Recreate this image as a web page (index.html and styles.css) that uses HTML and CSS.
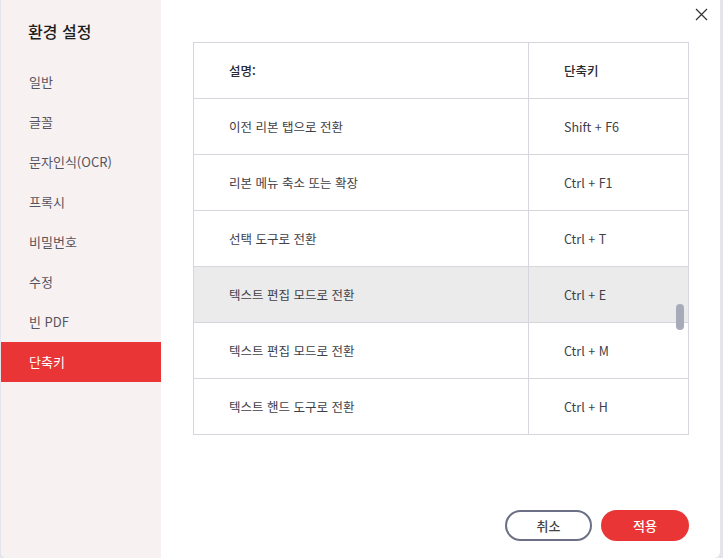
FILE: index.html
```html
<!DOCTYPE html>
<html lang="ko">
<head>
<meta charset="utf-8">
<link rel="stylesheet" href="styles.css">
</head>
<body>
<div class="dialog">
  <aside class="sidebar">
    <h1 class="title">환경 설정</h1>
    <nav class="menu">
      <div class="item">일반</div>
      <div class="item">글꼴</div>
      <div class="item">문자인식(OCR)</div>
      <div class="item">프록시</div>
      <div class="item">비밀번호</div>
      <div class="item">수정</div>
      <div class="item">빈 PDF</div>
      <div class="item active">단축키</div>
    </nav>
  </aside>
  <main class="content">
    <button class="close" aria-label="닫기">
      <svg width="13" height="13" viewBox="0 0 13 13"><path d="M1 1L12 12M12 1L1 12" stroke="#333" stroke-width="1.2" fill="none"/></svg>
    </button>
    <div class="table-wrap">
      <div class="row head"><div class="c1">설명:</div><div class="c2">단축키</div></div>
      <div class="row"><div class="c1">이전 리본 탭으로 전환</div><div class="c2">Shift + F6</div></div>
      <div class="row"><div class="c1">리본 메뉴 축소 또는 확장</div><div class="c2">Ctrl + F1</div></div>
      <div class="row"><div class="c1">선택 도구로 전환</div><div class="c2">Ctrl + T</div></div>
      <div class="row hover"><div class="c1">텍스트 편집 모드로 전환</div><div class="c2">Ctrl + E</div></div>
      <div class="row"><div class="c1">텍스트 편집 모드로 전환</div><div class="c2">Ctrl + M</div></div>
      <div class="row last"><div class="c1">텍스트 핸드 도구로 전환</div><div class="c2">Ctrl + H</div></div>
      <div class="thumb"></div>
    </div>
    <div class="actions">
      <button class="btn cancel">취소</button>
      <button class="btn apply">적용</button>
    </div>
  </main>
</div>
</body>
</html>
```
FILE: styles.css
```css
* { box-sizing: border-box; }
html, body { margin: 0; padding: 0; }
body {
  width: 723px;
  height: 558px;
  background: #e4e4ea;
  font-family: "Noto Sans CJK KR", "Noto Sans", sans-serif;
  overflow: hidden;
}
.dialog {
  display: flex;
  width: 719px;
  height: 558px;
  margin-left: 1px;
  background: #fff;
  border-radius: 0 0 6px 6px;
  overflow: hidden;
}
.sidebar {
  width: 160px;
  flex: none;
  background: #f8f1f1;
  padding-top: 20px;
}
.title {
  margin: 0 0 20px 27px;
  font-size: 16px;
  font-weight: 500;
  color: #1e1e1e;
  line-height: 22px;
}
.menu { display: flex; flex-direction: column; }
.item {
  height: 40px;
  line-height: 40px;
  padding-left: 28px;
  font-size: 13px;
  color: #555560;
}
.item.active {
  background: #e93535;
  color: #fff;
}
.content {
  position: relative;
  flex: 1;
  display: flex;
  flex-direction: column;
  padding: 42px 30px 17px 32px;
}
.close {
  position: absolute;
  top: 8px;
  right: 12px;
  width: 13px;
  height: 13px;
  padding: 0;
  border: 0;
  background: none;
  display: flex;
}
.table-wrap {
  position: relative;
  width: 496px;
  border: 1px solid #d6d6de;
}
.row {
  display: flex;
  height: 56px;
  border-bottom: 1px solid #d6d6de;
  font-size: 12.5px;
  color: #404048;
}
.row.last { height: 55px; border-bottom: 0; }
.row.hover { background: #ebebeb; }
.row.head { color: #2a2a30; font-weight: 500; }
.c1 {
  width: 335px;
  padding-left: 35px;
  padding-bottom: 1px;
  display: flex;
  align-items: center;
  border-right: 1px solid #d6d6de;
}
.c2 {
  flex: 1;
  padding-left: 35px;
  padding-bottom: 1px;
  display: flex;
  align-items: center;
}
.thumb {
  position: absolute;
  left: 482px;
  top: 261px;
  width: 8px;
  height: 26px;
  border-radius: 4px;
  background: #a7aab8;
}
.actions {
  margin-top: auto;
  display: flex;
  justify-content: flex-end;
  gap: 9px;
  width: 496px;
}
.btn {
  height: 31px;
  border-radius: 16px;
  font-family: inherit;
  font-size: 13px;
  font-weight: 500;
  padding: 0;
}
.cancel {
  width: 87px;
  background: #fff;
  border: 2px solid #6c7084;
  color: #444;
}
.apply {
  width: 88px;
  background: #e93535;
  border: 0;
  color: #fff;
}
```
